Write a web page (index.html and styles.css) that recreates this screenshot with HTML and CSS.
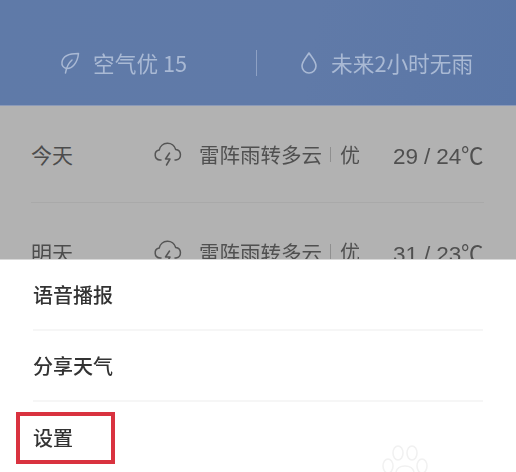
FILE: index.html
```html
<!DOCTYPE html>
<html lang="zh-CN">
<head>
<meta charset="utf-8">
<title>天气</title>
<link rel="stylesheet" href="styles.css">
</head>
<body>
<div class="screen">
  <header class="hero">
    <div class="stat stat-air">
      <svg class="ic-leaf" viewBox="0 0 20 24" fill="none" stroke="currentColor" stroke-width="1.5" stroke-linecap="round" stroke-linejoin="round"><path d="M18.5 2.5C12 2.5 3 4 2 11c-.5 3.5 1.5 6 4.5 6.5C12 18 17.5 12 18.5 2.500z"/><path d="M12 9C8.500 12 6.500 16 5.500 22"/></svg>
      <span>空气优 15</span>
    </div>
    <div class="vline"></div>
    <div class="stat stat-rain">
      <svg class="ic-drop" viewBox="0 0 18 24" fill="none" stroke="currentColor" stroke-width="1.6" stroke-linejoin="round"><path d="M9 2C6.500 6 2 10.500 2 15a7 7 0 0 0 14 0C16 10.500 11.500 6 9 2z"/></svg>
      <span>未来2小时无雨</span>
    </div>
  </header>
  <section class="list">
    <div class="row">
      <span class="day">今天</span>
      <svg class="ic-cloud" viewBox="0 0 30 26" fill="none" stroke="currentColor" stroke-width="1.5" stroke-linecap="round" stroke-linejoin="round"><path d="M8 19H7a5 5 0 0 1-.8-9.900A8.500 8.500 0 0 1 22.700 8.500 5.300 5.300 0 0 1 23 19h-1"/><path d="M16.500 12L12.500 18H17L13.500 24"/></svg>
      <span class="cond">雷阵雨转多云</span><i class="sep"></i><span class="aq">优</span>
      <span class="temp">29 / 24℃</span>
    </div>
    <div class="row">
      <span class="day">明天</span>
      <svg class="ic-cloud" viewBox="0 0 30 26" fill="none" stroke="currentColor" stroke-width="1.5" stroke-linecap="round" stroke-linejoin="round"><path d="M8 19H7a5 5 0 0 1-.8-9.900A8.500 8.500 0 0 1 22.700 8.500 5.300 5.300 0 0 1 23 19h-1"/><path d="M16.500 12L12.500 18H17L13.500 24"/></svg>
      <span class="cond">雷阵雨转多云</span><i class="sep"></i><span class="aq">优</span>
      <span class="temp">31 / 23℃</span>
    </div>
  </section>
  <nav class="sheet">
    <div class="item">语音播报</div>
    <div class="item">分享天气</div>
    <div class="item">设置</div>
    <svg class="paw" viewBox="0 0 60 30" fill="none" stroke="#f1f1f1" stroke-width="1.500"><ellipse cx="22" cy="11" rx="5" ry="7"/><ellipse cx="36" cy="11" rx="5" ry="7"/><ellipse cx="12" cy="24" rx="5" ry="7"/><ellipse cx="46" cy="24" rx="5" ry="7"/><path d="M20 30c2-8 16-8 18 0"/></svg>
  </nav>
  <div class="highlight"></div>
</div>
</body>
</html>
```
FILE: styles.css
```css
* { box-sizing: border-box; }
html, body { margin: 0; padding: 0; }
body { width: 516px; height: 472px; overflow: hidden; background: #fff; }
.screen {
  position: relative;
  width: 516px;
  height: 472px;
  overflow: hidden;
  font-family: "Noto Sans CJK SC", "Liberation Sans", sans-serif;
}
.hero {
  height: 106px;
  padding: 43px 0 0 60px;
  display: flex;
  align-items: flex-start;
  color: #a9b9d4;
  background: linear-gradient(100deg, #5f7aa8 0%, #607aa8 60%, #5a76a6 100%);
  border-bottom: 1px solid #8c9ab8;
  font-size: 21.7px;
  line-height: 40px;
  white-space: nowrap;
  filter: blur(0.5px);
}
.stat { display: flex; align-items: center; height: 40px; flex: none; }
.stat-air { width: 196px; }
.stat-rain { padding-left: 43px; }
.ic-leaf { width: 20px; height: 24px; margin-right: 13px; }
.ic-drop { width: 18px; height: 24px; margin-right: 13px; }
.vline { width: 1px; height: 26px; margin-top: 7px; background: #8ea1c4; }
.list {
  height: 154px;
  padding: 0 32px 0 31px;
  background: #b2b2b2;
  color: #505050;
  font-size: 20px;
  filter: blur(0.5px);
}
.row {
  height: 97px;
  display: flex;
  align-items: center;
  border-bottom: 1px solid #a9a9a9;
}
.row:last-child { border-bottom: 0; }
.day { width: 122px; font-size: 21px; color: #4c4c4c; }
.ic-cloud { width: 30px; height: 26px; margin-right: 16px; color: #555; }
.cond { width: 122px; font-size: 20.500px; white-space: nowrap; }
.sep { width: 1px; height: 15px; margin: 0 9px 0 9px; background: #8f8f8f; }
.aq { font-size: 20px; }
.temp { margin-left: auto; font-family: "Liberation Sans", sans-serif; font-size: 22.5px; letter-spacing: -0.1px; white-space: nowrap; }
.sheet {
  position: absolute;
  left: 0;
  right: 0;
  top: 260px;
  bottom: 0;
  padding: 0 33px;
  background: #fff;
  box-shadow: 0 -1px 0 #d8d8d8;
  color: #333;
  font-size: 20px;
  font-weight: 500;
  filter: blur(0.4px);
}
.item {
  height: 71px;
  display: flex;
  align-items: center;
  border-bottom: 2px solid #f6f6f6;
}
.item:last-of-type { border-bottom: 0; }
.paw { position: absolute; left: 376px; bottom: 0; width: 60px; height: 30px; }
.highlight {
  position: absolute;
  left: 16px;
  top: 412px;
  width: 99px;
  height: 52px;
  border: 4px solid #d9323f;
}
```
